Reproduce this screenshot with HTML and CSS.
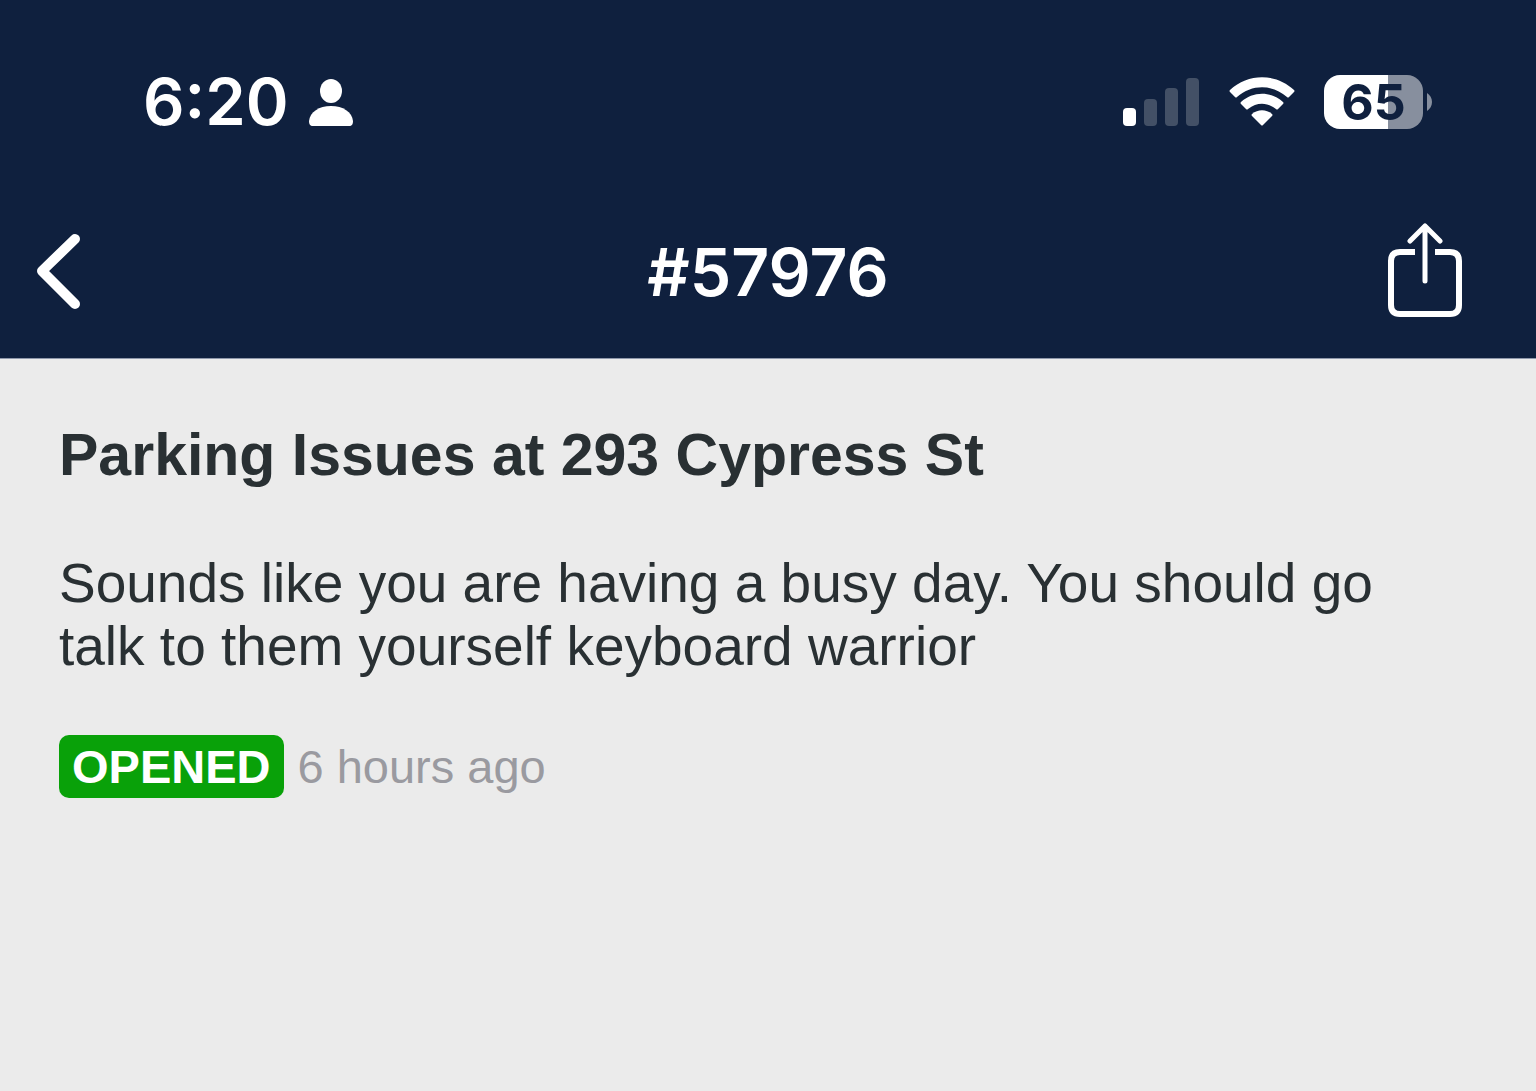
FILE: index.html
```
<!DOCTYPE html>
<html lang="en">

<head>
    <meta charset="UTF-8">
    <meta name="viewport" content="width=device-width, initial-scale=1.0">
    <title>#57976</title>
    <link rel="stylesheet" href="styles.css">
</head>

<body>
    <header class="header">
        <div class="status-bar">
            <div class="status-left">
                <span class="time">6:20</span>
                <svg class="person" width="44" height="48" viewBox="0 0 44 48" fill="#fff">
                    <ellipse cx="22" cy="13" rx="11" ry="12" />
                    <path d="M4 48C1 48 0 46 0 43C1 34 10 28 22 28S43 34 44 43C44 46 43 48 40 48Z" />
                </svg>
            </div>
            <div class="status-right">
                <svg width="77" height="50" viewBox="0 0 77 50" fill="#435066">
                    <rect x="0" y="31" width="13" height="18" rx="4" fill="#fff" />
                    <rect x="21" y="22" width="13" height="27" rx="4" />
                    <rect x="42" y="11" width="13" height="38" rx="4" />
                    <rect x="63" y="1" width="13" height="48" rx="4" />
                </svg>
                <svg width="66" height="50" viewBox="0 0 66 50" fill="#fff">
                    <path d="M1 13C19 -4 47 -4 65 13Q66 14 65 15L60 20Q59 21 58 20C43 7 23 7 8 20Q7 21 6 20L1 15Q0 14 1 13Z" />
                    <path d="M12 25C24 14 42 14 54 25Q55 26 54 27L49 32Q48 33 47 32C38 25 28 25 19 32Q18 33 17 32L12 27Q11 26 12 25Z" />
                    <path d="M23 37C29 32 37 32 43 37Q44 38 43 39L34 48Q33 49 32 48L23 39Q22 38 23 37Z" />
                </svg>
                <div class="battery">
                    <div class="battery-body">65</div>
                    <svg width="5" height="18" viewBox="0 0 5 18" fill="#878f9e">
                        <path d="M0 0C3 2 5 5 5 9S3 16 0 18Z" />
                    </svg>
                </div>
            </div>
        </div>
        <nav class="nav-bar">
            <button type="button" class="nav-btn" aria-label="Back">
                <svg width="44" height="76" viewBox="0 0 44 76" fill="none" stroke="#fff" stroke-width="10" stroke-linecap="round" stroke-linejoin="round">
                    <path d="M39 5L6 37L39 70" />
                </svg>
            </button>
            <h1>#57976</h1>
            <button type="button" class="nav-btn share" aria-label="Share">
                <svg width="76" height="98" viewBox="0 0 76 98" fill="none" stroke="#fff" stroke-width="5" stroke-linejoin="round">
                    <path d="M28 29H13Q4 29 4 38V82Q4 91 13 91H63Q72 91 72 82V38Q72 29 63 29H48" stroke-width="6" />
                    <path d="M38 3V58M23 18L38 3L53 18" stroke-linecap="round" />
                </svg>
            </button>
        </nav>
    </header>
    <main class="content">
        <h2>Parking Issues at 293 Cypress St</h2>
        <p class="description">Sounds like you are having a busy day. You should go talk to them yourself keyboard warrior</p>
        <div class="meta">
            <span class="badge">OPENED</span>
            <span class="ago">6 hours ago</span>
        </div>
    </main>
</body>

</html>
```
FILE: styles.css
```
body {
    margin: 0;
    font-family: "Liberation Sans", Arial, sans-serif;
    background-color: #ebebeb;
    color: #293033;
}

.header {
    background: #0f203e;
    color: #fff;
    font-family: Inter, sans-serif;
    padding-bottom: 18px;
    border-bottom: 1px solid #8f98ab;
}

.status-bar {
    display: flex;
    justify-content: space-between;
    align-items: center;
    height: 204px;
    padding: 0 104px 0 143px;
}

.status-left {
    display: flex;
    align-items: center;
    gap: 20px;
}

.time {
    font-size: 65px;
    font-weight: 600;
    line-height: 80px;
}

.status-right {
    display: flex;
    align-items: center;
    gap: 29px;
}

.battery {
    display: flex;
    align-items: center;
    gap: 4px;
}

.battery-body {
    width: 99px;
    height: 54px;
    border-radius: 16px;
    background: linear-gradient(to right, #fff 65%, #878f9e 65%);
    color: #0f203e;
    font-size: 50px;
    font-weight: 700;
    line-height: 54px;
    text-align: center;
}

.nav-bar {
    display: grid;
    grid-template-columns: 1fr auto 1fr;
    align-items: center;
    height: 136px;
    padding: 0 36px;
}

.nav-btn {
    display: flex;
    justify-self: start;
    padding: 0;
    background: none;
    border: none;
    cursor: pointer;
}

.share {
    justify-self: end;
    margin-right: 37px;
}

h1 {
    margin: 0;
    font-size: 66px;
    font-weight: 600;
    line-height: 80px;
}

.content {
    padding: 64px 80px 64px 59px;
}

h2 {
    margin: 0;
    font-size: 59px;
    line-height: 64px;
}

.description {
    margin: 65px 0 57px;
    font-size: 55px;
    line-height: 63px;
}

.meta {
    display: flex;
    align-items: center;
    gap: 14px;
    font-size: 47px;
}

.badge {
    padding: 0 13px;
    background: #09a109;
    border-radius: 10px;
    color: #fff;
    font-weight: bold;
    line-height: 63px;
}

.ago {
    color: #9a9aa0;
}
```
